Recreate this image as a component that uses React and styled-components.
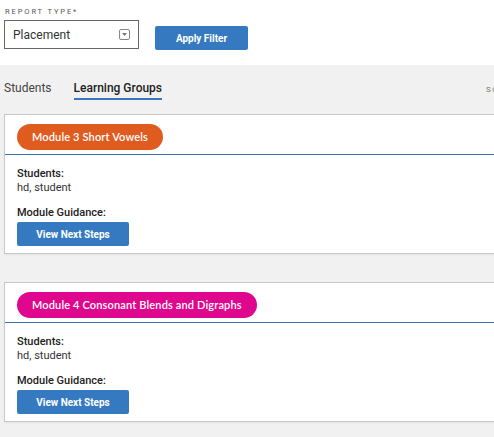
import React from 'react';
import styled, { createGlobalStyle } from 'styled-components';

const GlobalStyle = createGlobalStyle`
  html, body {
    margin: 0;
    padding: 0;
    overflow: hidden;
    background: #f1f1f1;
    font-family: Roboto, "Liberation Sans", sans-serif;
  }
`;

const groups = [
  { name: 'Module 3 Short Vowels', color: '#e05b1f', students: 'hd, student' },
  { name: 'Module 4 Consonant Blends and Digraphs', color: '#df078e', students: 'hd, student' },
];

const App = () => {
  return (
    <Page>
      <GlobalStyle />
      <FilterBar>
        <Field>
          <FieldLabel>Report Type*</FieldLabel>
          <Select>
            <span>Placement</span>
            <Caret>
              <svg width="5" height="3" viewBox="0 0 5 3">
                <path d="M0 0h5L2.5 3z" fill="#777" />
              </svg>
            </Caret>
          </Select>
        </Field>
        <ApplyBtn>Apply Filter</ApplyBtn>
      </FilterBar>
      <Content>
        <TabRow>
          <Tabs>
            <Tab>Students</Tab>
            <Tab active>Learning Groups</Tab>
          </Tabs>
          <SortLabel>Sort by</SortLabel>
        </TabRow>
        <CardList>
          {groups.map(g => (
            <Card key={g.name}>
              <CardHeader>
                <Pill color={g.color}>{g.name}</Pill>
              </CardHeader>
              <CardBody>
                <Label>Students:</Label>
                <Value>{g.students}</Value>
                <Label spaced>Module Guidance:</Label>
                <StepsBtn>View Next Steps</StepsBtn>
              </CardBody>
            </Card>
          ))}
        </CardList>
      </Content>
    </Page>
  );
};

const Page = styled.div`
  width: 640px;
`;

const FilterBar = styled.div`
  background: #fff;
  height: 65px;
  padding: 7px 0 0 4px;
  box-sizing: border-box;
  display: flex;
  align-items: flex-start;
  gap: 16px;
`;

const Field = styled.div`
  display: flex;
  flex-direction: column;
  gap: 4px;
`;

const FieldLabel = styled.div`
  font-size: 7.5px;
  letter-spacing: 1.9px;
  text-transform: uppercase;
  color: #555;
  padding-left: 1px;
  line-height: 9px;
`;

const Select = styled.div`
  width: 135px;
  height: 29px;
  box-sizing: border-box;
  border: 1px solid #666;
  display: flex;
  align-items: center;
  justify-content: space-between;
  padding: 0 8px 0 8px;
  font-size: 12px;
  color: #333;
`;

const Caret = styled.div`
  width: 11px;
  height: 11px;
  box-sizing: border-box;
  border: 1px solid #888;
  border-radius: 2px;
  display: flex;
  align-items: center;
  justify-content: center;
`;

const ApplyBtn = styled.button`
  margin-top: 19px;
  width: 93px;
  height: 24px;
  border: none;
  border-radius: 2px;
  background: #3579c1;
  color: #fff;
  font-family: Roboto, "Liberation Sans", sans-serif;
  font-weight: bold;
  font-size: 10px;
  padding: 0;
`;

const Content = styled.div`
  background: #f1f1f1;
  padding: 16px 0 14px 4px;
`;

const TabRow = styled.div`
  display: grid;
  grid-template-columns: 482px auto;
  align-items: center;
`;

const Tabs = styled.div`
  display: flex;
  gap: 22px;
`;

const Tab = styled.div`
  font-size: 12px;
  color: ${p => (p.active ? '#222' : '#444')};
  font-weight: ${p => (p.active ? 500 : 400)};
  padding-bottom: 2px;
  border-bottom: 2px solid ${p => (p.active ? '#3a76bf' : 'transparent')};
  line-height: 15px;
`;

const SortLabel = styled.div`
  font-size: 8px;
  letter-spacing: 1.6px;
  text-transform: uppercase;
  color: #777;
  margin-top: -2px;
`;

const CardList = styled.div`
  margin-top: 14px;
  display: flex;
  flex-direction: column;
  gap: 28px;
`;

const Card = styled.div`
  background: #fff;
  border: 1px solid #c8c8c8;
  box-shadow: 0 1px 2px rgba(0, 0, 0, 0.06);
`;

const CardHeader = styled.div`
  padding: 9px 12px 4px;
  border-bottom: 1px solid #3a72b5;
`;

const Pill = styled.div`
  display: inline-block;
  background: ${p => p.color};
  color: #fff;
  border-radius: 14px;
  height: 26px;
  line-height: 26px;
  padding: 0 15px;
  font-family: Lato, "Noto Sans", sans-serif;
  font-weight: 600;
  font-size: 11px;
  letter-spacing: 0.15px;
`;

const CardBody = styled.div`
  padding: 12px 12px 7px;
  display: flex;
  flex-direction: column;
  align-items: flex-start;
`;

const Label = styled.div`
  font-size: 11px;
  font-weight: 500;
  color: #222;
  line-height: 14px;
  margin-top: ${p => (p.spaced ? '11px' : '0')};
`;

const Value = styled.div`
  font-size: 11px;
  color: #333;
  line-height: 14px;
`;

const StepsBtn = styled.button`
  margin-top: 2px;
  width: 112px;
  height: 24px;
  border: none;
  border-radius: 2px;
  background: #3579c1;
  color: #fff;
  font-family: Roboto, "Liberation Sans", sans-serif;
  font-weight: bold;
  font-size: 10px;
  padding: 0;
`;

export default App;
